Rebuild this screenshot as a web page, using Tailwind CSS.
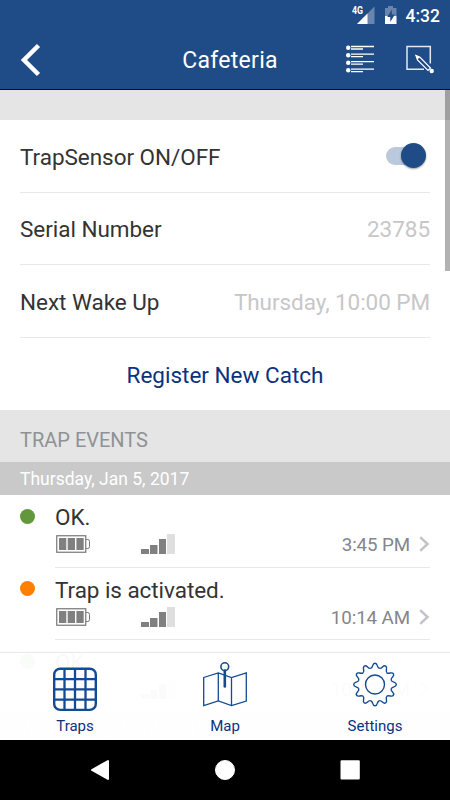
<!DOCTYPE html>
<html lang="en">

<head>
  <meta charset="UTF-8">
  <meta name="viewport" content="width=device-width, initial-scale=1.0">
  <title>Cafeteria</title>
  <script src="https://cdn.jsdelivr.net/npm/@tailwindcss/browser@4"></script>
</head>

<body class="relative flex flex-col w-[450px] h-[800px] overflow-hidden bg-white font-[Roboto,sans-serif] text-[22.5px] text-[#333333]">

  <!-- shared icons -->
  <svg class="hidden">
    <symbol id="battery" viewBox="0 0 34 18">
      <rect x=".75" y=".75" width="29" height="16.5" fill="none" stroke="#777" stroke-width="1.2" />
      <path d="M30 4.500h1.800q1.700 0 1.700 2v5q0 2-1.700 2H30" fill="none" stroke="#777" />
      <path d="M3 3h7.300v12H3zM11.700 3h7.300v12h-7.300zM20.400 3h7.300v12h-7.300z" fill="#808080" />
    </symbol>
    <symbol id="signal" viewBox="0 0 34 20">
      <path d="M0 15h8v5H0zM9 11h7.500v9H9zM18 5h7v15h-7z" fill="#808080" />
      <path d="M26 0h8v20h-8z" fill="#dfdfdf" />
    </symbol>
    <symbol id="chevron" viewBox="0 0 11 16">
      <path d="M1.200 1.200 8.500 8l-7.300 6.800" fill="none" stroke="#c3c3c8" stroke-width="2.500" />
    </symbol>
  </svg>

  <header class="h-[90px] shrink-0 flex flex-col bg-[#1f4c87] border-b border-[#00006e] text-white">
    <div class="h-[30px] flex justify-end items-center pr-2.5">
      <svg class="w-[23px] h-[20px] mr-[9px]" viewBox="0 0 23 20">
        <path d="M22.500 1.500v17.500h-17.500z" fill="#6985ad" />
        <path d="M15.500 8.500v10.500h-10.500z" fill="#fff" />
        <rect width="12" height="9.500" fill="#1f4c87" />
        <text x="0" y="9" textLength="11" lengthAdjust="spacingAndGlyphs" font-family="Roboto" font-size="10" font-weight="700" fill="#fff">4G</text>
      </svg>
      <svg class="w-[14px] h-[20px] mr-[8px]" viewBox="0 0 14 20">
        <path d="M4 1h5v2h3.500v8H1V3h3z" fill="#6985ad" />
        <path d="M1 11h11.500v8H1z" fill="#fff" />
        <path d="M7.800 4.500 3.300 12h3v5l4.500-7.500h-3z" fill="#1f4c87" />
      </svg>
      <span class="text-[17.5px] font-medium leading-5 pt-0.5">4:32</span>
    </div>
    <div class="h-[60px] grid grid-cols-[130px_1fr_120px] items-center">
      <svg class="w-[22px] h-[34px] ml-5 mt-px" viewBox="0 0 22 34">
        <path d="M18.500 2.500 4 17l14.500 14.500" fill="none" stroke="#fff" stroke-width="4.500" />
      </svg>
      <h1 class="text-center text-[23px] tracking-[.3px] pt-1">Cafeteria</h1>
      <div class="flex items-center gap-[31px] pl-4">
        <svg class="w-[29px] h-[30px]" viewBox="0 0 29 30" fill="#fff">
          <circle cx="2.200" cy="3.700" r="2.200" />
          <circle cx="2.200" cy="11.300" r="2.200" />
          <circle cx="2.200" cy="18.800" r="2.200" />
          <circle cx="2.200" cy="26.300" r="2.200" />
          <path d="M5 2.500h23M5 10.100h23M5 17.600h23M5 25.100h23" stroke="#fff" stroke-width="1.300" />
          <path d="M5 5h12M5 12.600h12M5 20.100h12M5 27.600h12" stroke="#fff" stroke-width="1.300" />
        </svg>
        <svg class="w-[29px] h-[30px]" viewBox="0 0 29 30" fill="none" stroke="#e4e9f0" stroke-width="1.500">
          <path d="M24.300 19.500V2.500H1v22.800h17" />
          <path d="m10 11.500 1.500 4.500L22 26.500l2.500-2.500L14 13.300z" stroke="#fff" stroke-width="1.200" fill="#1f4c87" />
          <path d="M9.200 10.800l4.800 2.200-2.500 2.500z" fill="#fff" stroke="none" />
          <circle cx="25.700" cy="27" r="2.200" fill="#fff" stroke="none" />
        </svg>
      </div>
    </div>
  </header>

  <main class="relative h-[650px] shrink-0 overflow-hidden">
    <div class="h-[30px] bg-[#e5e5e5]"></div>

    <div class="px-5">
      <div class="h-[73px] flex items-center justify-between border-b border-[#e8e8e8]">
        <span class="pt-[3px] tracking-[-.04px]">TrapSensor ON/OFF</span>
        <div class="relative w-[40px] h-[26px] mr-1">
          <div class="absolute top-[4px] left-0 w-[36px] h-[18px] rounded-full bg-[#bbc9dc]"></div>
          <div class="absolute top-0 right-0 size-[25px] rounded-full bg-[#1f4c87] shadow-[0_1px_2px_rgba(0,0,0,.4)]"></div>
        </div>
      </div>
      <div class="h-[72px] flex items-center justify-between border-b border-[#e8e8e8] pt-[3px]">
        <span class="tracking-[-.04px]">Serial Number</span>
        <span class="tracking-[-.05px] text-[#c7c7c7]">23785</span>
      </div>
      <div class="h-[73px] flex items-center justify-between border-b border-[#e8e8e8] pt-[3px]">
        <span class="tracking-[-.04px]">Next Wake Up</span>
        <span class="tracking-[-.06px] text-[#c7c7c7]">Thursday, 10:00 PM</span>
      </div>
      <button class="w-full h-[72px] pt-[3px] flex items-center justify-center text-[#0c3180]">Register New Catch</button>
    </div>

    <h2 class="h-[52px] pl-5 pt-2 flex items-center bg-[#e5e5e5] text-[20px] text-[#8e9295]">TRAP EVENTS</h2>
    <h3 class="h-[33px] pl-5 pt-0.5 flex items-center bg-[#c9c9c9] text-[17.5px] text-white">Thursday, Jan 5, 2017</h3>

    <div class="flex pl-5">
      <div class="size-[15px] mt-[14px] mr-5 rounded-full bg-[#62973b]"></div>
      <div class="w-[375px] h-[73px] pt-2 border-b border-[#e8e8e8]">
        <div class="leading-7">OK.</div>
        <div class="flex items-center h-[26px]">
          <svg class="w-[34px] h-[18px] ml-px"><use href="#battery" /></svg>
          <svg class="w-[34px] h-[20px] ml-[51px]"><use href="#signal" /></svg>
          <span class="ml-auto pt-0.5 text-[18.75px] tracking-[-.1px] text-[#85858a]">3:45 PM</span>
          <svg class="w-[11px] h-[16px] ml-[9px]"><use href="#chevron" /></svg>
        </div>
      </div>
    </div>

    <div class="flex pl-5">
      <div class="size-[15px] mt-[13px] mr-5 rounded-full bg-[#ff8000]"></div>
      <div class="w-[375px] h-[72px] pt-2 border-b border-[#e8e8e8]">
        <div class="leading-7 tracking-[-.06px]">Trap is activated.</div>
        <div class="flex items-center h-[26px]">
          <svg class="w-[34px] h-[18px] ml-px"><use href="#battery" /></svg>
          <svg class="w-[34px] h-[20px] ml-[51px]"><use href="#signal" /></svg>
          <span class="ml-auto pt-0.5 text-[18.75px] tracking-[-.1px] text-[#85858a]">10:14 AM</span>
          <svg class="w-[11px] h-[16px] ml-[9px]"><use href="#chevron" /></svg>
        </div>
      </div>
    </div>

    <div class="flex pl-5">
      <div class="size-[15px] mt-[14px] mr-5 rounded-full bg-[#62973b]"></div>
      <div class="w-[375px] h-[72px] pt-2">
        <div class="leading-7">OK.</div>
        <div class="flex items-center h-[26px]">
          <svg class="w-[34px] h-[18px] ml-px"><use href="#battery" /></svg>
          <svg class="w-[34px] h-[20px] ml-[51px]"><use href="#signal" /></svg>
          <span class="ml-auto pt-0.5 text-[18.75px] tracking-[-.1px] text-[#85858a]">10:10 AM</span>
          <svg class="w-[11px] h-[16px] ml-[9px]"><use href="#chevron" /></svg>
        </div>
      </div>
    </div>
    <h3 class="h-[33px] pl-5 pt-0.5 flex items-center bg-[#c9c9c9] text-[17.5px] text-white">Wednesday, Jan 4, 2017</h3>

    <!-- scrollbar -->
    <div class="absolute top-0 right-0 w-[5px] h-[181px] bg-black/30"></div>

    <!-- tab bar -->
    <nav class="absolute bottom-0 inset-x-0 h-[88px] grid grid-cols-3 bg-white/97 border-t border-[#e8e8e8] text-[15px] text-[#0c3180]">
      <a class="flex flex-col items-center">
        <svg class="w-[44px] h-[46px] mt-[8px] overflow-visible" viewBox="0 0 44 46" fill="none" stroke="#134a94">
          <rect x="1.200" y="7.700" width="41.600" height="41.200" rx="6" stroke-width="2.400" />
          <path d="M11.500 8v41M22 8v41M32.500 8v41M1 18.200h42M1 28.300h42M1 38.600h42" stroke-width="2.300" />
        </svg>
        <span class="leading-5 mt-[9px]">Traps</span>
      </a>
      <a class="flex flex-col items-center">
        <svg class="w-[44px] h-[46px] mt-[8px]" viewBox="0 0 44 46" fill="none" stroke="#134a94" stroke-width="1.300">
          <path d="M.7 16.500 15.300 12 28.500 16.500 43.300 12v28L28.500 44.500 15.300 40 .7 44.500zM15.300 12v28M28.500 16.500v28" />
          <path d="M21.800 9.500v16" stroke-width="2.600" stroke-linecap="round" />
          <circle cx="21.800" cy="5.700" r="3.900" stroke-width="1.600" />
        </svg>
        <span class="leading-5 mt-[9px]">Map</span>
      </a>
      <a class="flex flex-col items-center">
        <svg class="w-[44px] h-[46px] mt-[8px]" viewBox="-22 -23.500 44 46" fill="none" stroke="#134a94" stroke-width="1.400">
          <path id="tooth" d="M-4.350-16.200C-1.400-17-3.200-21.300 0-21.300S1.400-17 4.350-16.200" />
          <use href="#tooth" transform="rotate(30)" />
          <use href="#tooth" transform="rotate(60)" />
          <use href="#tooth" transform="rotate(90)" />
          <use href="#tooth" transform="rotate(120)" />
          <use href="#tooth" transform="rotate(150)" />
          <use href="#tooth" transform="rotate(180)" />
          <use href="#tooth" transform="rotate(210)" />
          <use href="#tooth" transform="rotate(240)" />
          <use href="#tooth" transform="rotate(270)" />
          <use href="#tooth" transform="rotate(300)" />
          <use href="#tooth" transform="rotate(330)" />
          <circle r="9.500" />
        </svg>
        <span class="leading-5 mt-[9px]">Settings</span>
      </a>
    </nav>
  </main>

  <!-- system navigation -->
  <footer class="h-[60px] shrink-0 flex items-center justify-center bg-black">
    <svg class="w-[270px] h-[22px]" viewBox="0 0 270 22" fill="#fff" stroke="#fff" stroke-linejoin="round">
      <path d="M2 11 18 2v18z" stroke-width="2" />
      <circle cx="135" cy="11" r="9.500" />
      <rect x="251.500" y="2.300" width="17.300" height="17.300" stroke-width="2" />
    </svg>
  </footer>

</body>

</html>
